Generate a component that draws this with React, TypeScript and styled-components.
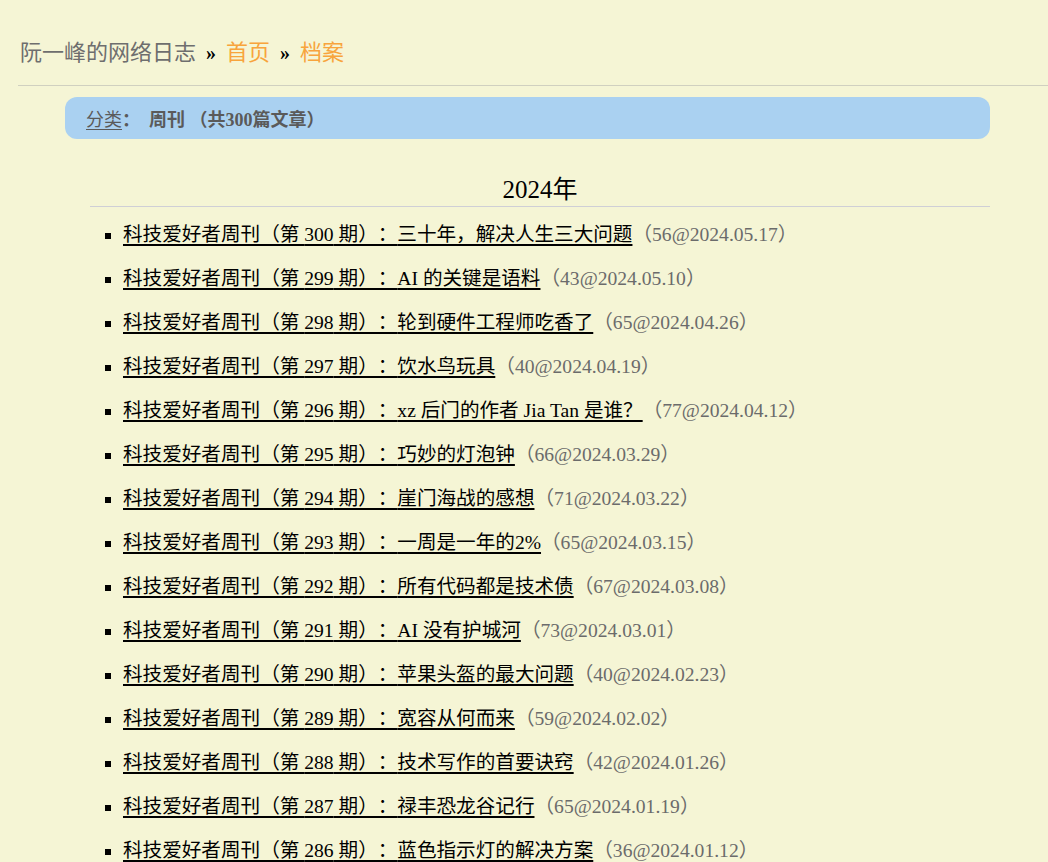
import React from 'react';
import styled, { createGlobalStyle } from 'styled-components';

type Post = {
  no: number;
  title: string;
  comments: number;
  date: string;
};

const posts: Post[] = [
  { no: 300, title: '三十年，解决人生三大问题', comments: 56, date: '2024.05.17' },
  { no: 299, title: 'AI 的关键是语料', comments: 43, date: '2024.05.10' },
  { no: 298, title: '轮到硬件工程师吃香了', comments: 65, date: '2024.04.26' },
  { no: 297, title: '饮水鸟玩具', comments: 40, date: '2024.04.19' },
  { no: 296, title: 'xz 后门的作者 Jia Tan 是谁？', comments: 77, date: '2024.04.12' },
  { no: 295, title: '巧妙的灯泡钟', comments: 66, date: '2024.03.29' },
  { no: 294, title: '崖门海战的感想', comments: 71, date: '2024.03.22' },
  { no: 293, title: '一周是一年的2%', comments: 65, date: '2024.03.15' },
  { no: 292, title: '所有代码都是技术债', comments: 67, date: '2024.03.08' },
  { no: 291, title: 'AI 没有护城河', comments: 73, date: '2024.03.01' },
  { no: 290, title: '苹果头盔的最大问题', comments: 40, date: '2024.02.23' },
  { no: 289, title: '宽容从何而来', comments: 59, date: '2024.02.02' },
  { no: 288, title: '技术写作的首要诀窍', comments: 42, date: '2024.01.26' },
  { no: 287, title: '禄丰恐龙谷记行', comments: 65, date: '2024.01.19' },
  { no: 286, title: '蓝色指示灯的解决方案', comments: 36, date: '2024.01.12' },
];

const GlobalStyle = createGlobalStyle`
  body {
    margin: 0;
    background: #f5f5d5;
    font-family: 'Liberation Serif', 'Noto Sans CJK SC', serif;
    color: #000;
    text-spacing-trim: space-all;
  }
`;

const App = () => {
  return (
    <>
      <GlobalStyle />
      <Header>
        <SiteName>阮一峰的网络日志</SiteName>
        <Sep>»</Sep>
        <Crumb href="#">首页</Crumb>
        <Sep>»</Sep>
        <Crumb href="#">档案</Crumb>
      </Header>
      <Main>
        <CategoryBar>
          <CategoryLink href="#">分类</CategoryLink>
          <span>：&nbsp;&nbsp;周刊 （共300篇文章）</span>
        </CategoryBar>
        <YearSection>
          <YearTitle>2024年</YearTitle>
          <PostList>
            {posts.map((p) => (
              <li key={p.no}>
                <PostLink href="#">
                  科技爱好者周刊（第 {p.no} 期）：{p.title}
                </PostLink>
                <Meta>
                  （{p.comments}@{p.date}）
                </Meta>
              </li>
            ))}
          </PostList>
        </YearSection>
      </Main>
    </>
  );
};

const Header = styled.header`
  display: flex;
  align-items: center;
  margin-left: 18px;
  padding: 42px 0 21px 2px;
  border-bottom: 1px solid #d0d0c0;
  font-size: 22px;
  line-height: 22px;
`;

const SiteName = styled.span`
  color: #6e6e6e;
`;

const Sep = styled.span`
  color: #000;
  font-weight: bold;
  margin: 0 10px;
  font-size: 20px;
`;

const Crumb = styled.a`
  color: #f8a43c;
  text-decoration: none;
`;

const Main = styled.main`
  padding: 11px 58px 0 65px;
`;

const CategoryBar = styled.div`
  display: flex;
  align-items: center;
  height: 42px;
  padding-left: 21px;
  border-radius: 12px;
  background: #aad1f1;
  color: #5a5a5a;
  font-size: 18px;
  font-weight: bold;
`;

const CategoryLink = styled.a`
  color: #5a5a5a;
  font-weight: normal;
  text-decoration: underline;
  text-underline-offset: 3px;
`;

const YearSection = styled.section`
  margin-left: 25px;
`;

const YearTitle = styled.h2`
  margin: 38px 0 0;
  padding-bottom: 4px;
  border-bottom: 1px solid #cfcfd6;
  text-align: center;
  font-size: 25px;
  font-weight: normal;
  line-height: 25px;
`;

const PostList = styled.ul`
  margin: 16px 0 0;
  padding-left: 33px;
  list-style: square;
  font-size: 19.6px;
  line-height: 24px;

  li {
    margin-bottom: 20px;
  }
`;

const PostLink = styled.a`
  color: #000;
  text-decoration: underline;
  text-decoration-thickness: 2px;
  text-underline-offset: 3px;
`;

const Meta = styled.span`
  color: #6b6b6b;
`;

export default App;
